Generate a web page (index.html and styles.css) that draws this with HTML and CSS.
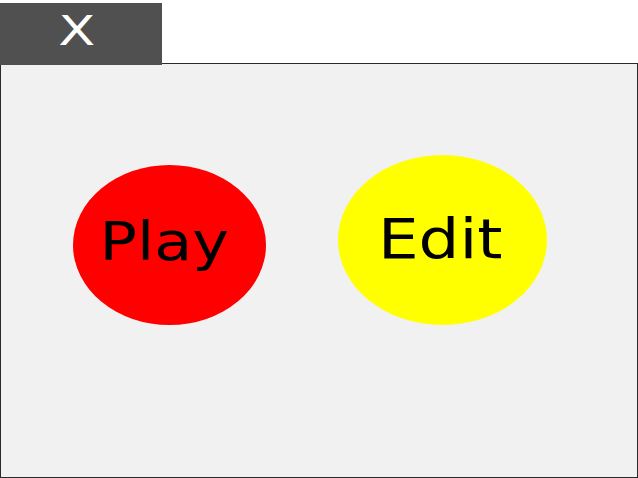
FILE: index.html
```html
<!DOCTYPE html>
<html lang="en">
<head>
    <meta charset="UTF-8">
    <title>Menu</title>
    <link rel="stylesheet" href="styles.css">
</head>
<body>
    <div class="top">
        <div class="close-bar">
            <span class="close-label">X</span>
        </div>
    </div>
    <div class="panel">
        <div class="choices">
            <button class="choice play"><span>Play</span></button>
            <button class="choice edit"><span>Edit</span></button>
        </div>
    </div>
</body>
</html>
```
FILE: styles.css
```css
body {
    margin: 0;
    background: #fff;
    font-family: "DejaVu Sans", sans-serif;
}

.top {
    position: relative;
    z-index: 1;
    padding-top: 3px;
    margin-bottom: -2px;
}

.close-bar {
    width: 162px;
    height: 62px;
    background: #505050;
    text-align: center;
}

.close-label {
    display: inline-block;
    color: #fff;
    font-size: 40px;
    line-height: 56px;
    margin-left: -8px;
    transform: scaleX(1.35);
}

.panel {
    height: 413px;
    border: 1px solid #2a2a2a;
    background-color: #f1f1f1;
}

.choices {
    display: flex;
    align-items: flex-start;
    gap: 72px;
    padding: 91px 0 0 72px;
}

.choice {
    border: 0;
    padding: 0;
    border-radius: 50%;
    display: flex;
    align-items: center;
    justify-content: center;
    font-family: "DejaVu Sans", sans-serif;
    font-size: 53px;
    color: #000;
}

.choice span {
    transform: scaleX(1.17);
}

.play {
    width: 193px;
    height: 160px;
    margin-top: 10px;
    background-color: #ff0000;
}

.play span {
    margin: -8px 10px 0 0;
}

.edit {
    width: 209px;
    height: 170px;
    background-color: #ffff00;
    font-size: 55px;
}

.edit span {
    margin: -2px 4px 0 0;
}
```
